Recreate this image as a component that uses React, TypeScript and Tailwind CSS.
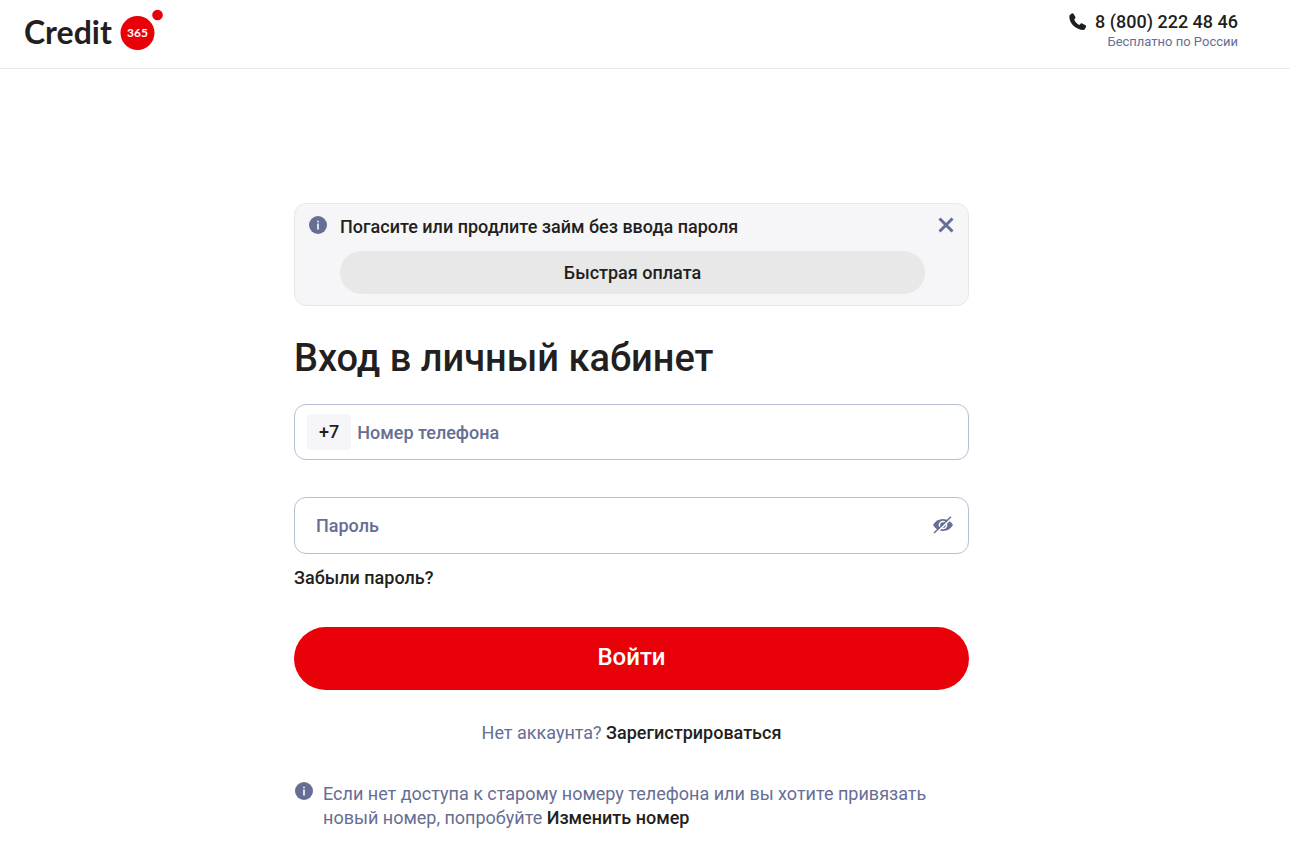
import { useState } from 'react';
import type { FormEvent } from 'react';

function Logo() {
  return (
    <svg width="140" height="42" viewBox="0 0 140 42" role="img" aria-label="Credit 365">
      <text x="0" y="35" className="font-['Lato',sans-serif] text-[32px] font-bold" fill="#231f20">
        Credit
      </text>
      <circle cx="113.5" cy="24" r="17" fill="#e90109" />
      <circle cx="133.5" cy="6" r="5.3" fill="#e90109" />
      <text
        x="113.5"
        y="28"
        textAnchor="middle"
        className="font-['Lato',sans-serif] text-[12px] font-bold"
        fill="#fff"
      >
        365
      </text>
    </svg>
  );
}

function PhoneIcon() {
  return (
    <svg width="18" height="18" viewBox="0 0 18 18" fill="#231f20" aria-hidden="true">
      <path d="M1.1 1.800 2.800.6c.6-.4 1.400-.3 1.800.3l1.700 2.800c.3.6.2 1.200-.2 1.700L5.200 6.400c.9 2.300 2.800 4.300 5.200 5.500l1.200-1.200c.5-.4 1.100-.5 1.600-.2l3.300 1.800c.6.4.8 1.100.5 1.700l-1.100 2c-.3.600-.9.900-1.600.900C7.300 16.900.4 10.500.3 3.700c0-.8.300-1.500.8-1.900Z" />
    </svg>
  );
}

function InfoIcon() {
  return (
    <svg className="shrink-0" width="18" height="18" viewBox="0 0 18 18" aria-hidden="true">
      <circle cx="9" cy="9" r="9" fill="#666e94" />
      <path d="M8.200 4.700h1.600v1.600H8.200zM8.200 7.500h1.600V13.500H8.200z" fill="#fff" />
    </svg>
  );
}

function CloseIcon() {
  return (
    <svg width="16" height="16" viewBox="0 0 16 16" aria-hidden="true">
      <path d="M1.500 1.500l13 13M14.500 1.500l-13 13" stroke="#666e94" strokeWidth="3" />
    </svg>
  );
}

function EyeIcon({ crossed }: { crossed: boolean }) {
  return (
    <svg width="22" height="18" viewBox="0 0 22 18" aria-hidden="true">
      <path d="M1 9C3.200 5.200 6.700 3 11 3s7.800 2.200 10 6c-2.200 3.800-5.700 6-10 6S3.200 12.800 1 9Z" fill="#666e94" />
      <circle cx="11" cy="9" r="3.600" fill="none" stroke="#fff" strokeWidth="1.500" />
      {crossed && (
        <>
          <path d="M3.200 17.800 20.200 1.600" stroke="#fff" strokeWidth="1.600" />
          <path d="M2 17 19 .8" stroke="#666e94" strokeWidth="1.500" />
        </>
      )}
    </svg>
  );
}

function QuickPay({ onClose }: { onClose: () => void }) {
  return (
    <section className="flex items-start rounded-xl border border-[#e8e8e8] bg-[#f6f6f9] pt-3 pr-3.5 pb-[11px] pl-3.5">
      <InfoIcon />
      <div className="ml-[13px] flex-1">
        <p className="text-[18px] leading-[22px] font-medium">Погасите или продлите займ без ввода пароля</p>
        <button type="button" className="mt-[13px] h-[43px] w-full rounded-full bg-[#e8e8e8] text-[18px] font-medium">
          Быстрая оплата
        </button>
      </div>
      <button type="button" aria-label="Закрыть" onClick={onClose} className="mt-px ml-[13px]">
        <CloseIcon />
      </button>
    </section>
  );
}

export default function App() {
  const [showQuickPay, setShowQuickPay] = useState(true);
  const [visible, setVisible] = useState(false);
  const [phone, setPhone] = useState('');
  const [password, setPassword] = useState('');

  const submit = (e: FormEvent) => e.preventDefault();

  return (
    <div className="min-h-screen bg-white font-['Roboto',sans-serif] text-[#231f20]">
      <header className="flex items-center justify-between border-b border-[#e8e8f2] pt-[9px] pr-[52px] pb-[17px] pl-6">
        <a href="#">
          <Logo />
        </a>
        <div className="text-right">
          <a href="tel:88002224846" className="flex items-center gap-2 text-[18px] leading-6 font-medium">
            <PhoneIcon />8 (800) 222 48 46
          </a>
          <p className="text-[13px] leading-4 text-[#666e94]">Бесплатно по России</p>
        </div>
      </header>

      <main className="pt-[134px] pr-[27px] pb-3.5">
        <div className="mx-auto max-w-[675px]">
          {showQuickPay && <QuickPay onClose={() => setShowQuickPay(false)} />}

          <h1 className="mt-7 text-[38px] leading-[48px] font-medium">Вход в личный кабинет</h1>

          <form onSubmit={submit}>
            <div className="mt-[22px] flex h-14 items-center rounded-xl border border-[#b7bfd3] px-3">
              <span className="rounded bg-[#f6f6f9] px-3 text-[18px] leading-9 font-medium">+7</span>
              <input
                type="tel"
                aria-label="Номер телефона"
                placeholder="Номер телефона"
                value={phone}
                onChange={(e) => setPhone(e.target.value)}
                className="ml-1.5 h-full min-w-0 flex-1 text-[18px] font-medium outline-none placeholder:text-[#666e94]"
              />
            </div>

            <div className="mt-[37px] flex h-[57px] items-center rounded-xl border border-[#b7bfd3] pr-3.5 pl-[21px]">
              <input
                type={visible ? 'text' : 'password'}
                aria-label="Пароль"
                placeholder="Пароль"
                value={password}
                onChange={(e) => setPassword(e.target.value)}
                className="h-full min-w-0 flex-1 text-[18px] font-medium outline-none placeholder:text-[#666e94]"
              />
              <button type="button" aria-label="Показать пароль" onClick={() => setVisible(!visible)} className="pb-0.5">
                <EyeIcon crossed={!visible} />
              </button>
            </div>

            <a href="#" className="mt-3 inline-block text-[18px] leading-6 font-medium">
              Забыли пароль?
            </a>

            <button
              type="submit"
              className="mt-9 block h-[63px] w-full rounded-full bg-[#e90109] pb-1 text-[24px] font-medium text-white"
            >
              Войти
            </button>
          </form>

          <p className="mt-[31px] text-center text-[18px] leading-6 text-[#666e94]">
            Нет аккаунта?{' '}
            <a href="#" className="font-medium text-[#231f20]">
              Зарегистрироваться
            </a>
          </p>

          <div className="mt-[37px] flex gap-2.5 pr-10 pl-px">
            <InfoIcon />
            <p className="text-[18px] leading-6 text-[#666e94]">
              Если нет доступа к старому номеру телефона или вы хотите привязать новый номер, попробуйте{' '}
              <a href="#" className="font-medium text-[#231f20]">
                Изменить номер
              </a>
            </p>
          </div>
        </div>
      </main>
    </div>
  );
}
